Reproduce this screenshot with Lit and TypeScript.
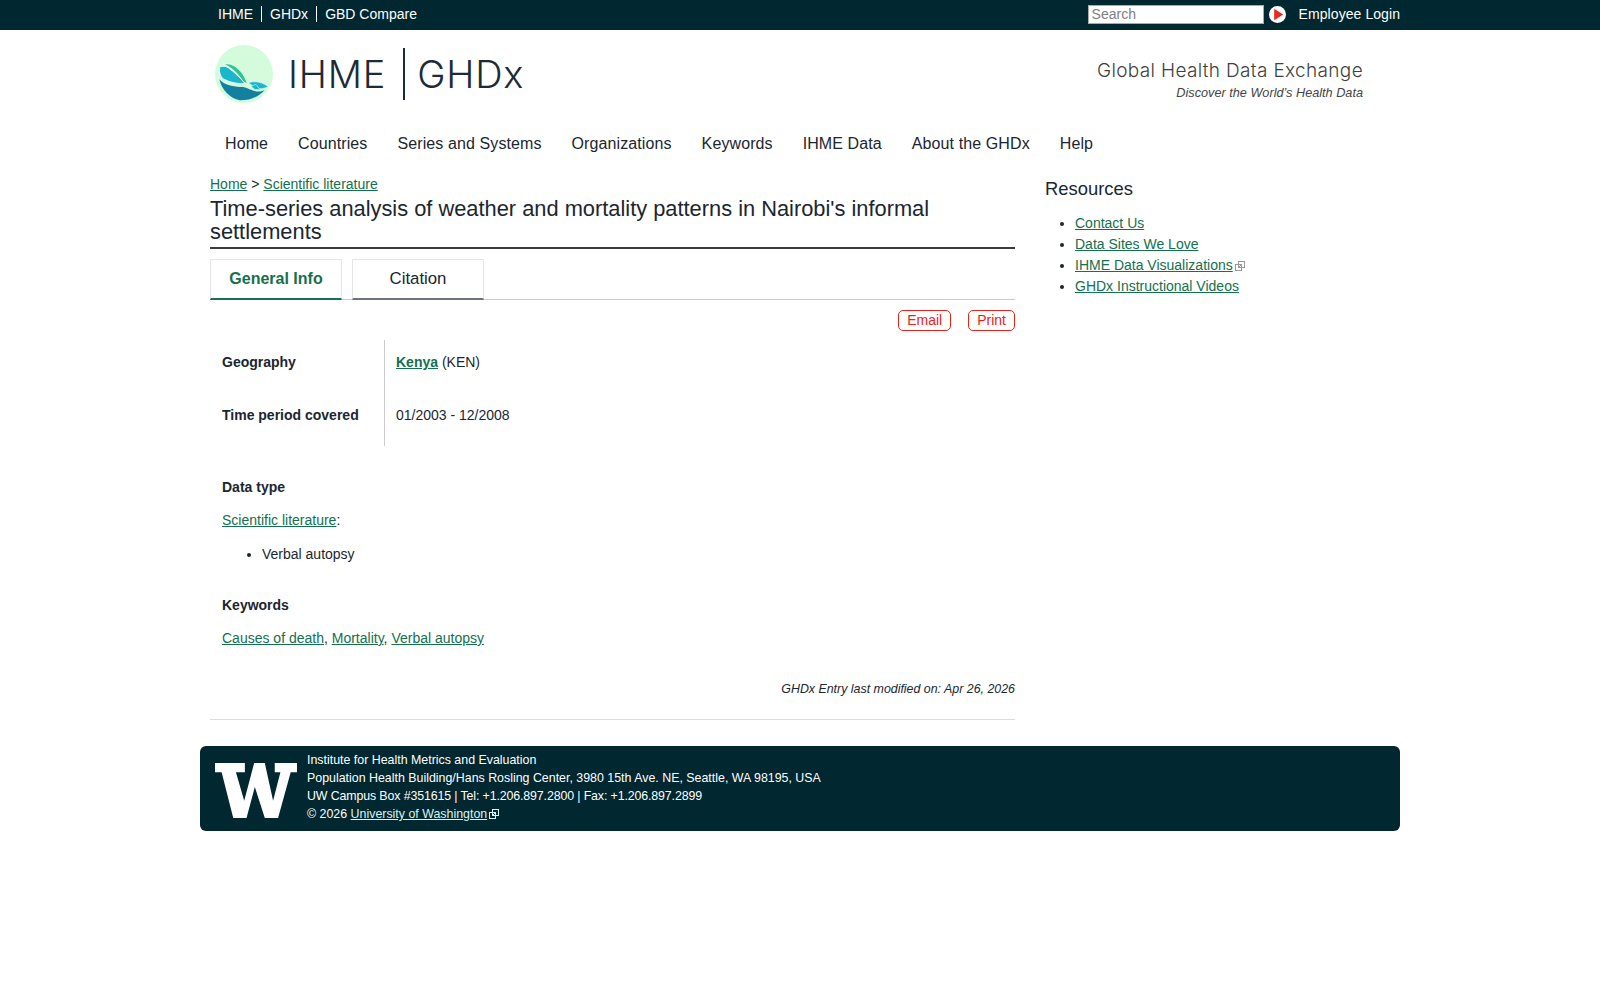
import { LitElement, html, css, svg } from "lit";
import { customElement } from "lit/decorators.js";

const ext = (color: string) => svg`<svg class="ext" width="10" height="10" viewBox="0 0 10 10" fill="none" stroke="${color}" stroke-width="1"><rect x="0.5" y="3.5" width="6" height="6"/><rect x="3.5" y="0.5" width="6" height="6"/><path d="M3 7 L7 3"/></svg>`;

@customElement("app-root")
export class AppRoot extends LitElement {
  static styles = css`
    :host { display: block; font-family: "Liberation Sans", Arial, sans-serif; color: #1a2630; background: #fff; min-height: 1000px; font-size: 14px; }
    a { color: #14704d; text-decoration: underline; }
    .wrap { width: 1200px; margin: 0 auto; }
    .topbar { background: #012730; height: 30px; color: #fff; }
    .topbar .wrap { display: flex; align-items: center; justify-content: space-between; height: 29px; }
    .toplinks { display: flex; padding-left: 18px; padding-bottom: 1px; font-size: 14px; }
    .toplinks span { padding: 0 8px 0 8px; border-left: 1px solid #fff; line-height: 16px; }
    .toplinks span:first-child { padding-left: 0; border-left: 0; }
    .topright { display: flex; align-items: center; }
    .search { width: 176px; height: 19px; box-sizing: border-box; background: #fff; border: 1px solid #aaa; color: #808080; font-size: 14px; line-height: 17px; padding-left: 3px; }
    .go { margin-left: 5px; display: block; }
    .login { margin-left: 13px; padding-bottom: 1px; font-size: 14px; letter-spacing: 0.07px; }
    .head { display: flex; justify-content: space-between; padding: 15px 37px 0 15px; height: 90px; box-sizing: content-box; }
    .logo { display: flex; align-items: center; height: 58px; }
    .logotext { font-family: Inter, sans-serif; font-weight: 300; font-size: 38px; letter-spacing: 0.8px; color: #1c2b36; line-height: 58px; }
    .ihme { margin-left: 15px; }
    .sep { width: 2px; height: 52px; background: #1c2b36; margin: 0 12px 0 17px; }
    .tag { text-align: right; padding-top: 14px; }
    .tag1 { font-family: Inter, sans-serif; font-weight: 300; font-size: 19px; letter-spacing: 0.34px; color: #3f3f3f; line-height: 24px; }
    .tag2 { font-style: italic; font-size: 12.7px; color: #444; line-height: 20px; }
    nav { display: flex; padding-left: 10px; height: 30px; line-height: 30px; font-size: 16px; letter-spacing: 0.1px; margin-top: -6px; }
    nav span { padding: 0 15px; }
    .cols { display: flex; margin-top: 15px; padding-left: 10px; }
    main { width: 805px; }
    aside { margin-left: 30px; width: 355px; }
    .crumb { line-height: 20px; font-size: 14px; }
    h1 { font-weight: 400; font-size: 21.84px; line-height: 23px; margin: 3px 0 0; padding-bottom: 4px; border-bottom: 2px solid #3c3c3c; }
    .tabs { display: flex; gap: 10px; margin-top: 10px; border-bottom: 1px solid #ccc; height: 40px; }
    .tab { width: 132px; height: 41px; box-sizing: border-box; border: 1px solid #e6e6e6; border-bottom: 2px solid #6c757d; text-align: center; font-size: 16.8px; line-height: 38px; }
    .tab.on { color: #14704d; font-size: 16px; font-weight: 700; border-bottom-color: #14704d; }
    .btns { display: flex; justify-content: flex-end; gap: 17px; margin-top: 10px; }
    .btn { border: 1px solid #e8231a; border-radius: 5px; color: #e8231a; font-size: 14px; line-height: 19px; padding: 0 8px; }
    .grid { display: grid; grid-template-columns: 175px 1fr; margin-top: 9px; }
    .k { padding: 0 12px; font-weight: 700; border-right: 1px solid #ccc; height: 53px; line-height: 45px; }
    .v { padding: 0 11px; height: 53px; line-height: 45px; }
    .block { padding-left: 12px; margin-top: 31px; }
    .label { font-weight: 700; line-height: 20px; }
    .block p { margin: 13px 0 0; line-height: 20px; }
    .block ul { margin: 14px 0 0; padding-left: 40px; line-height: 20px; }
    .mod { text-align: right; font-style: italic; font-size: 12.4px; line-height: 20px; margin-top: 31px; }
    hr { border: 0; border-top: 1px solid #ddd; margin: 20px 0 0; }
    h2 { font-weight: 400; font-size: 18.4px; line-height: 24px; margin: 0; padding-top: 3px; }
    aside ul { margin: 12px 0 0; padding-left: 30px; line-height: 21px; }
    .ext { margin-left: 2px; vertical-align: -1px; }
    footer { width: 1200px; margin: 26px auto 0; height: 85px; box-sizing: border-box; background: #012730; border-radius: 6px; color: #fff; display: flex; font-size: 12.4px; line-height: 18px; padding: 5px 0 0 15px; }
    footer svg.w { margin: 12px 10px 0 0; flex: none; }
    footer a { color: #d9f5ee; }
    .digits { letter-spacing: -0.13px; }
  `;

  render() {
    return html`
      <div class="topbar"><div class="wrap">
        <div class="toplinks"><span>IHME</span><span>GHDx</span><span>GBD Compare</span></div>
        <div class="topright">
          <div class="search">Search</div>
          <svg class="go" width="17" height="17" viewBox="0 0 18 18"><circle cx="9" cy="9" r="9" fill="#fff"/><path d="M5.5 3 L15 9 L5.5 15 Z" fill="#e8291c"/></svg>
          <span class="login">Employee Login</span>
        </div>
      </div></div>
      <div class="wrap">
        <div class="head">
          <div class="logo">
            <svg width="58" height="58" viewBox="0 0 175 175">
              <circle cx="87.5" cy="87.5" r="87.5" fill="#d4fcdc"/>
              <path d="M13 103 C28 122 55 125 85 127 C100 130 115 140 125 140 C135 142 145 138 150 135 C135 155 105 168 75 167 C45 160 20 135 13 103 Z" fill="#13809f"/>
              <path d="M28 58 C55 52 85 78 97 116 L85 112 C70 85 50 68 28 58 Z" fill="#2cc58c" stroke="#fff" stroke-width="1.5"/>
              <path d="M13 67 C25 62 35 64 42 70 C58 82 78 100 90 116 C70 118 40 112 22 100 C15 92 13 80 13 67 Z" fill="#1ab6cb" stroke="#fff" stroke-width="2.5"/>
              <path d="M100 115 C115 108 140 110 160 125 C150 132 130 135 118 128 C112 122 108 118 100 115 Z" fill="#1ab6cb" stroke="#fff" stroke-width="1.5"/>
              <path d="M108 124 L124 119 L136 135 L120 134 Z" fill="#1ab6cb" stroke="#fff" stroke-width="1.5"/>
            </svg>
            <span class="logotext ihme">IHME</span>
            <span class="sep"></span>
            <span class="logotext">GHDx</span>
          </div>
          <div class="tag">
            <div class="tag1">Global Health Data Exchange</div>
            <div class="tag2">Discover the World’s Health Data</div>
          </div>
        </div>
        <nav>
          ${["Home", "Countries", "Series and Systems", "Organizations", "Keywords", "IHME Data", "About the GHDx", "Help"].map((n) => html`<span>${n}</span>`)}
        </nav>
        <div class="cols">
          <main>
            <div class="crumb"><a href="#">Home</a> &gt; <a href="#">Scientific literature</a></div>
            <h1>Time-series analysis of weather and mortality patterns in Nairobi's informal settlements</h1>
            <div class="tabs"><div class="tab on">General Info</div><div class="tab">Citation</div></div>
            <div class="btns"><span class="btn">Email</span><span class="btn">Print</span></div>
            <div class="grid">
              <div class="k">Geography</div><div class="v"><a href="#"><b>Kenya</b></a> (KEN)</div>
              <div class="k">Time period covered</div><div class="v">01/2003 - 12/2008</div>
            </div>
            <div class="block">
              <div class="label">Data type</div>
              <p><a href="#">Scientific literature</a>:</p>
              <ul><li>Verbal autopsy</li></ul>
            </div>
            <div class="block">
              <div class="label">Keywords</div>
              <p><a href="#">Causes of death</a>, <a href="#">Mortality</a>, <a href="#">Verbal autopsy</a></p>
            </div>
            <div class="mod">GHDx Entry last modified on: Apr 26, 2026</div>
            <hr />
          </main>
          <aside>
            <h2>Resources</h2>
            <ul>
              <li><a href="#">Contact Us</a></li>
              <li><a href="#">Data Sites We Love</a></li>
              <li><a href="#">IHME Data Visualizations</a>${ext("#999")}</li>
              <li><a href="#">GHDx Instructional Videos</a></li>
            </ul>
          </aside>
        </div>
        <footer>
          <svg class="w" width="82" height="55" viewBox="15 25 247 160" preserveAspectRatio="none"><path fill="#fff" d="M15 25 H105 V52 H78 L103 135 L133 25 H165 L190 135 L212 52 H195 V25 H262 V52 H243 L205 185 H165 L135 95 L110 185 H70 L35 52 H15 Z"/></svg>
          <div>
            Institute for Health Metrics and Evaluation<br />
            Population Health Building/Hans Rosling Center, 3980 15th Ave. NE, Seattle, WA 98195, USA<br />
            <span class="digits">UW Campus Box #351615 | Tel: +1.206.897.2800 | Fax: +1.206.897.2899</span><br />
            © 2026 <a href="#">University of Washington</a>${ext("#d9f5ee")}
          </div>
        </footer>
      </div>
    `;
  }
}
